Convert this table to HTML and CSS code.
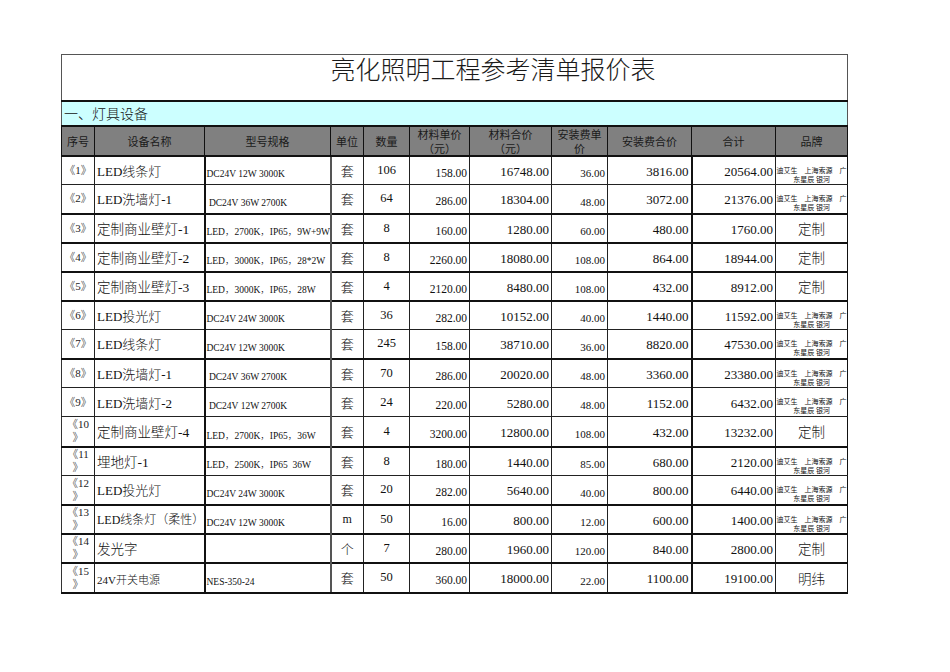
FILE: index.html
```html
<!DOCTYPE html>
<html lang="zh-CN">
<head>
<meta charset="utf-8">
<title>亮化照明工程参考清单报价表</title>
<link rel="stylesheet" href="styles.css">
</head>
<body>
<div class="page">
<table class="sheet">
<colgroup>
<col class="c-seq"><col class="c-name"><col class="c-model"><col class="c-unit"><col class="c-qty"><col class="c-mp"><col class="c-mt"><col class="c-ip"><col class="c-it"><col class="c-sum"><col class="c-brand">
</colgroup>
<tbody>
<tr class="r-title"><td colspan="11" class="title">亮化照明工程参考清单报价表</td></tr>
<tr class="r-section"><td colspan="11" class="section">一、灯具设备</td></tr>
<tr class="r-head">
<th>序号</th><th>设备名称</th><th>型号规格</th><th>单位</th><th>数量</th><th>材料单价<br>（元）</th><th>材料合价<br>（元）</th><th>安装费单<br>价</th><th>安装费合价</th><th>合计</th><th>品牌</th>
</tr>
<tr class="row hl-gray">
<td class="seq">《1》</td><td class="name">LED线条灯</td><td class="model">DC24V 12W 3000K</td><td class="unit">套</td><td class="qty">106</td><td class="num sm">158.00</td><td class="num">16748.00</td><td class="num xs">36.00</td><td class="num">3816.00</td><td class="num">20564.00</td><td class="brand"><div class="brand-text">迪艾生　上海索源　广<br>东星辰 银河</div></td>
</tr>
<tr class="row hl-gray">
<td class="seq">《2》</td><td class="name">LED洗墙灯-1</td><td class="model"> DC24V 36W 2700K</td><td class="unit">套</td><td class="qty">64</td><td class="num sm">286.00</td><td class="num">18304.00</td><td class="num xs">48.00</td><td class="num">3072.00</td><td class="num">21376.00</td><td class="brand"><div class="brand-text">迪艾生　上海索源　广<br>东星辰 银河</div></td>
</tr>
<tr class="row hl-dark">
<td class="seq">《3》</td><td class="name big">定制商业壁灯-1</td><td class="model">LED，2700K，IP65，9W+9W</td><td class="unit">套</td><td class="qty">8</td><td class="num sm">160.00</td><td class="num">1280.00</td><td class="num xs">60.00</td><td class="num">480.00</td><td class="num">1760.00</td><td class="brand-word">定制</td>
</tr>
<tr class="row hl-dark">
<td class="seq">《4》</td><td class="name big">定制商业壁灯-2</td><td class="model">LED，3000K，IP65，28*2W</td><td class="unit">套</td><td class="qty">8</td><td class="num sm">2260.00</td><td class="num">18080.00</td><td class="num xs">108.00</td><td class="num">864.00</td><td class="num">18944.00</td><td class="brand-word">定制</td>
</tr>
<tr class="row hl-dark">
<td class="seq">《5》</td><td class="name big">定制商业壁灯-3</td><td class="model">LED，3000K，IP65，28W</td><td class="unit">套</td><td class="qty">4</td><td class="num sm">2120.00</td><td class="num">8480.00</td><td class="num xs">108.00</td><td class="num">432.00</td><td class="num">8912.00</td><td class="brand-word">定制</td>
</tr>
<tr class="row hl-dark">
<td class="seq">《6》</td><td class="name">LED投光灯</td><td class="model">DC24V 24W 3000K</td><td class="unit">套</td><td class="qty">36</td><td class="num sm">282.00</td><td class="num">10152.00</td><td class="num xs">40.00</td><td class="num">1440.00</td><td class="num">11592.00</td><td class="brand"><div class="brand-text">迪艾生　上海索源　广<br>东星辰 银河</div></td>
</tr>
<tr class="row hl-gray">
<td class="seq">《7》</td><td class="name">LED线条灯</td><td class="model">DC24V 12W 3000K</td><td class="unit">套</td><td class="qty">245</td><td class="num sm">158.00</td><td class="num">38710.00</td><td class="num xs">36.00</td><td class="num">8820.00</td><td class="num">47530.00</td><td class="brand"><div class="brand-text">迪艾生　上海索源　广<br>东星辰 银河</div></td>
</tr>
<tr class="row hl-dark">
<td class="seq">《8》</td><td class="name">LED洗墙灯-1</td><td class="model"> DC24V 36W 2700K</td><td class="unit">套</td><td class="qty">70</td><td class="num sm">286.00</td><td class="num">20020.00</td><td class="num xs">48.00</td><td class="num">3360.00</td><td class="num">23380.00</td><td class="brand"><div class="brand-text">迪艾生　上海索源　广<br>东星辰 银河</div></td>
</tr>
<tr class="row hl-gray">
<td class="seq">《9》</td><td class="name">LED洗墙灯-2</td><td class="model"> DC24V 12W 2700K</td><td class="unit">套</td><td class="qty">24</td><td class="num sm">220.00</td><td class="num">5280.00</td><td class="num xs">48.00</td><td class="num">1152.00</td><td class="num">6432.00</td><td class="brand"><div class="brand-text">迪艾生　上海索源　广<br>东星辰 银河</div></td>
</tr>
<tr class="row hl-gray tall">
<td class="seq two">《10<br>》</td><td class="name big">定制商业壁灯-4</td><td class="model">LED，2700K，IP65，36W</td><td class="unit">套</td><td class="qty">4</td><td class="num sm">3200.00</td><td class="num">12800.00</td><td class="num xs">108.00</td><td class="num">432.00</td><td class="num">13232.00</td><td class="brand-word">定制</td>
</tr>
<tr class="row hl-dark">
<td class="seq two">《11<br>》</td><td class="name big">埋地灯-1</td><td class="model">LED，2500K，IP65  36W</td><td class="unit">套</td><td class="qty">8</td><td class="num sm">180.00</td><td class="num">1440.00</td><td class="num xs">85.00</td><td class="num">680.00</td><td class="num">2120.00</td><td class="brand"><div class="brand-text">迪艾生　上海索源　广<br>东星辰 银河</div></td>
</tr>
<tr class="row hl-gray">
<td class="seq two">《12<br>》</td><td class="name">LED投光灯</td><td class="model">DC24V 24W 3000K</td><td class="unit">套</td><td class="qty">20</td><td class="num sm">282.00</td><td class="num">5640.00</td><td class="num xs">40.00</td><td class="num">800.00</td><td class="num">6440.00</td><td class="brand"><div class="brand-text">迪艾生　上海索源　广<br>东星辰 银河</div></td>
</tr>
<tr class="row hl-dark">
<td class="seq two">《13<br>》</td><td class="name narrow">LED线条灯（柔性）</td><td class="model">DC24V 12W 3000K</td><td class="unit latin">m</td><td class="qty">50</td><td class="num sm">16.00</td><td class="num">800.00</td><td class="num xs">12.00</td><td class="num">600.00</td><td class="num">1400.00</td><td class="brand"><div class="brand-text">迪艾生　上海索源　广<br>东星辰 银河</div></td>
</tr>
<tr class="row hl-dark">
<td class="seq two">《14<br>》</td><td class="name big">发光字</td><td class="model"></td><td class="unit">个</td><td class="qty">7</td><td class="num sm">280.00</td><td class="num">1960.00</td><td class="num xs">120.00</td><td class="num">840.00</td><td class="num">2800.00</td><td class="brand-word">定制</td>
</tr>
<tr class="row hl-dark last tall">
<td class="seq two">《15<br>》</td><td class="name small">24V开关电源</td><td class="model">NES-350-24</td><td class="unit">套</td><td class="qty">50</td><td class="num sm">360.00</td><td class="num">18000.00</td><td class="num xs">22.00</td><td class="num">1100.00</td><td class="num">19100.00</td><td class="brand-word">明纬</td>
</tr>
</tbody>
</table>
</div>
</body>
</html>
```
FILE: styles.css
```css
html, body {
  margin: 0;
  padding: 0;
  background: #ffffff;
}

.page {
  padding: 54px 0 0 61px;
  font-family: "Liberation Serif", "Noto Sans CJK SC", serif;
  color: #111;
}

.sheet {
  border-collapse: collapse;
  table-layout: fixed;
  width: 786px;
}

.c-seq { width: 33px; }
.c-name { width: 110px; }
.c-model { width: 126px; }
.c-unit { width: 33px; }
.c-qty { width: 46px; }
.c-mp { width: 60px; }
.c-mt { width: 82px; }
.c-ip { width: 56px; }
.c-it { width: 84px; }
.c-sum { width: 84px; }
.c-brand { width: 72px; }

.sheet td, .sheet th {
  padding: 0 2px;
  overflow: hidden;
  white-space: nowrap;
  border: 1px solid #222;
}

/* title */
.sheet .r-title { height: 46px; }
.sheet td.title {
  font-family: "Noto Sans CJK SC", sans-serif;
  font-size: 25px;
  font-weight: 300;
  line-height: 26px;
  text-align: center;
  vertical-align: top;
  overflow: visible;
  padding: 0 0 0 77px;
  color: #1a1a1a;
  border-top: 1px solid #555;
  border-left: 1px solid #555;
  border-right: 1px solid #555;
  border-bottom: 2px solid #111;
}

/* section */
.sheet .r-section { height: 25px; }
.sheet td.section {
  background: #ccffff;
  font-family: "Noto Sans CJK SC", sans-serif;
  font-size: 14px;
  font-weight: 300;
  line-height: 18px;
  text-align: left;
  padding-left: 2px;
  color: #111;
  border-left: 1px solid #555;
  border-right: 1px solid #555;
  border-bottom: 2px solid #111;
}

/* header */
.sheet .r-head { height: 30px; }
.sheet .r-head th {
  background: #808080;
  font-family: "Noto Sans CJK SC", sans-serif;
  font-weight: 400;
  font-size: 11px;
  line-height: 14px;
  color: #1a1a1a;
  text-align: center;
  vertical-align: middle;
  padding: 0;
  border: 1px solid #111;
  border-bottom: 2px solid #111;
}

/* data rows */
.sheet .row { height: 29px; }
.sheet .row.tall { height: 30px; }
.sheet .row td { vertical-align: middle; font-weight: 300; }

.sheet .row.hl-gray td { border-top: 1px solid #7a7a7a; }
.sheet .row.hl-dark td { border-top: 2px solid #111; }
.sheet .row.last td { border-bottom: 2px solid #111; }

.sheet td.seq {
  font-size: 11px;
  line-height: 13px;
  text-align: center;
  color: #222;
  padding: 0;
}

.sheet td.name {
  font-size: 13px;
  text-align: left;
  padding: 0 0 0 2px;
}
.sheet td.name.big { font-size: 13.5px; }
.sheet td.name.narrow { font-size: 12px; }
.sheet td.name.small { font-size: 11px; padding-top: 2px; }

.sheet td.model {
  font-size: 9.5px;
  line-height: 11px;
  text-align: left;
  white-space: pre;
  vertical-align: bottom;
  padding: 0 0 4px 1px;
}

.sheet td.unit {
  font-size: 13px;
  text-align: center;
  padding: 0;
}
.sheet td.unit.latin { font-size: 12px; }

.sheet td.qty {
  font-size: 12.5px;
  text-align: center;
  padding: 0;
}

.sheet td.num {
  font-size: 13px;
  text-align: right;
  padding: 3px 2px 0 0;
}
.sheet td.num.sm { font-size: 11.5px; padding-top: 5px; }
.sheet td.num.xs { font-size: 11px; padding-top: 6px; }

.sheet td.brand {
  vertical-align: top;
  overflow: visible;
  padding: 0;
}
.brand-text {
  margin-top: 10px;
  height: 12px;
  font-size: 7px;
  font-weight: 400;
  line-height: 9px;
  text-align: center;
  color: #111;
}

.sheet td.brand-word {
  font-size: 13.5px;
  text-align: center;
  padding: 0;
}

/* vertical line colors (data rows) */
.sheet .row td.seq { border-left: 1px solid #333; }
.sheet .row td.name { border-left: 1px solid #111; }
.sheet .row td.model { border-left: 2px solid #111; }
.sheet .row td.unit { border-left: 2px solid #555; }
.sheet .row td.qty { border-left: 1px solid #888; }
.sheet .row td.num.sm { border-left: 1px solid #888; }
.sheet .row td:nth-child(7) { border-left: 1px solid #222; }
.sheet .row td.num.xs { border-left: 1px solid #888; }
.sheet .row td:nth-child(9) { border-left: 1px solid #888; }
.sheet .row td:nth-child(10) { border-left: 2px solid #111; }
.sheet .row td:nth-child(11) { border-left: 1px solid #888; border-right: 1px solid #111; }
```
